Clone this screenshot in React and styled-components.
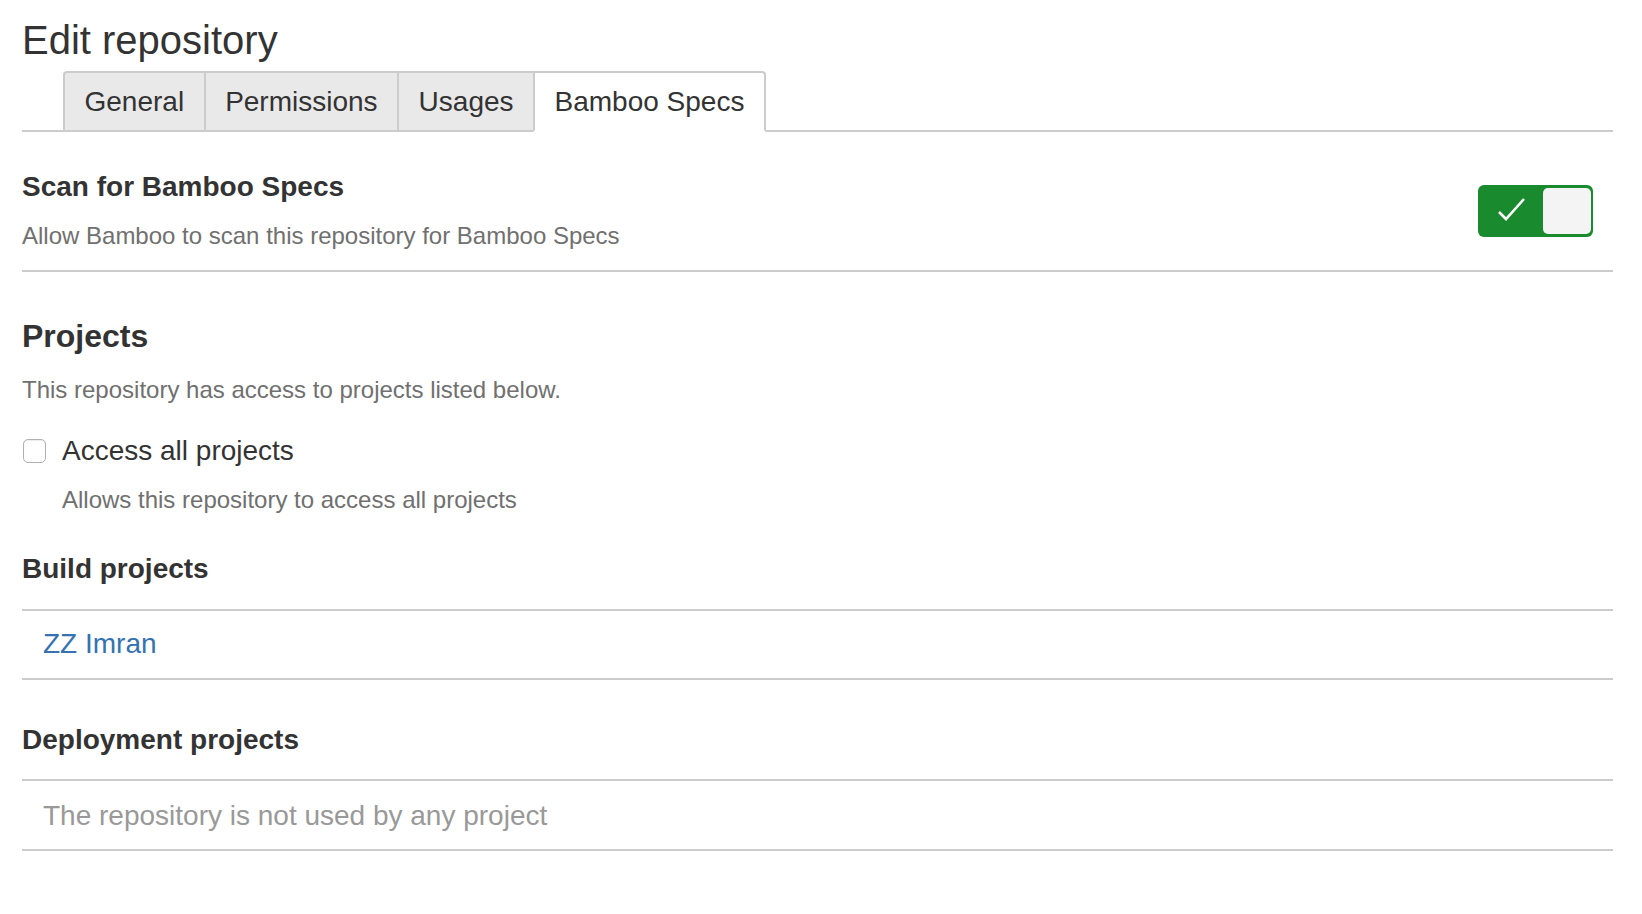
import React, {useState} from 'react';
import styled, {createGlobalStyle} from 'styled-components';

const GlobalStyle = createGlobalStyle`
    body {
        margin : 0;
        background : #ffffff;
        font-family : "Liberation Sans", Arial, Helvetica, sans-serif;
        color : #333333;
    }
`;

const Page = styled.div`
    padding : 16px 29px 40px 22px;
`;

const Title = styled.h1`
    margin : 0;
    font-size : 40px;
    line-height : 48px;
    font-weight : normal;
    color : #333333;
`;

const TabBar = styled.div`
    display : flex;
    align-items : flex-end;
    margin-top : 7px;
    padding-left : 41px;
    border-bottom : 2px solid #cccccc;
`;

const Tab = styled.div`
    height : 57px;
    line-height : 57px;
    padding : 0 19.5px;
    font-size : 28px;
    margin-bottom : -2px;
    border-top : 2px solid #cccccc;
    border-left : 2px solid #cccccc;
    border-bottom : 2px solid ${p => (p.$active ? '#ffffff' : '#cccccc')};
    background : ${p => (p.$active ? '#ffffff' : '#e9e9e9')};
    color : #333333;
    cursor : pointer;

    &:first-child {
        border-top-left-radius : 4px;
    }
    &:last-child {
        border-right : 2px solid #cccccc;
        border-top-right-radius : 4px;
    }
`;

const ScanSection = styled.div`
    display : flex;
    align-items : center;
    justify-content : space-between;
    padding : 38px 20px 19px 0;
    border-bottom : 2px solid #cccccc;
`;

const Heading = styled.div`
    font-size : 28px;
    line-height : 34px;
    font-weight : bold;
    color : #333333;
    margin-top : ${p => p.$top || 0}px;
`;

const BigHeading = styled.h2`
    margin : 45px 0 0 0;
    font-size : 32px;
    line-height : 38px;
    font-weight : bold;
    color : #333333;
`;

const Description = styled.div`
    font-size : 24px;
    line-height : 30px;
    color : #707070;
    margin-top : ${p => p.$top || 0}px;
    padding-left : ${p => p.$indent || 0}px;
`;

const Toggle = styled.button`
    position : relative;
    width : 115px;
    height : 52px;
    padding : 0;
    border : none;
    border-radius : 6px;
    background : ${p => (p.$on ? '#1a8a2e' : '#cccccc')};
    cursor : pointer;
`;

const Knob = styled.span`
    position : absolute;
    top : 3px;
    bottom : 3px;
    width : 48px;
    ${p => (p.$on ? 'right : 2px;' : 'left : 2px;')}
    background : #f4f4f4;
    border-radius : 5px;
`;

const CheckMark = styled.svg`
    position : absolute;
    left : 18px;
    top : 13px;
`;

const CheckRow = styled.label`
    display : flex;
    align-items : center;
    gap : 16px;
    margin-top : 29px;
    font-size : 28px;
    line-height : 34px;
    color : #333333;
    cursor : pointer;
`;

const Box = styled.span`
    width : 21px;
    height : 22px;
    margin-left : 1px;
    border : 1px solid #b0b0b0;
    border-radius : 5px;
    background : #ffffff;
    box-shadow : inset 0 1px 1px rgba(0, 0, 0, 0.08);
`;

const Table = styled.div`
    margin-top : ${p => p.$top}px;
    border-top : 2px solid #cccccc;
    border-bottom : 2px solid #cccccc;
`;

const Row = styled.div`
    padding : ${p => (p.$muted ? '18px 21px 16px' : '16px 21px 17px')};
    font-size : 28px;
    line-height : 34px;
    color : ${p => (p.$muted ? '#999999' : '#3572b0')};
`;

const RowLink = styled.a`
    color : #3572b0;
    text-decoration : none;
`;

const tabs = ["General", "Permissions", "Usages", "Bamboo Specs"];

function App () {
    const [on, setOn] = useState(true);

    return (
        <Page>
            <GlobalStyle/>
            <Title>Edit repository</Title>
            <TabBar>
                {tabs.map(t => (
                    <Tab key={t} $active={t === "Bamboo Specs"}>{t}</Tab>
                ))}
            </TabBar>

            <ScanSection>
                <div>
                    <Heading>Scan for Bamboo Specs</Heading>
                    <Description $top={17}>Allow Bamboo to scan this repository for Bamboo Specs</Description>
                </div>
                <Toggle $on={on} onClick={() => setOn(!on)}>
                    {on && (
                        <CheckMark width="30" height="26" viewBox="0 0 30 26">
                            <polyline points="3,14 10,21 28,1" fill="none" stroke="#ffffff" strokeWidth="2.6"/>
                        </CheckMark>
                    )}
                    <Knob $on={on}/>
                </Toggle>
            </ScanSection>

            <BigHeading>Projects</BigHeading>
            <Description $top={20}>This repository has access to projects listed below.</Description>
            <CheckRow>
                <Box/>
                Access all projects
            </CheckRow>
            <Description $top={17} $indent={40}>Allows this repository to access all projects</Description>

            <Heading $top={37}>Build projects</Heading>
            <Table $top={23}>
                <Row><RowLink href="#">ZZ Imran</RowLink></Row>
            </Table>

            <Heading $top={43}>Deployment projects</Heading>
            <Table $top={22}>
                <Row $muted>The repository is not used by any project</Row>
            </Table>
        </Page>
    );
}

export default App;
